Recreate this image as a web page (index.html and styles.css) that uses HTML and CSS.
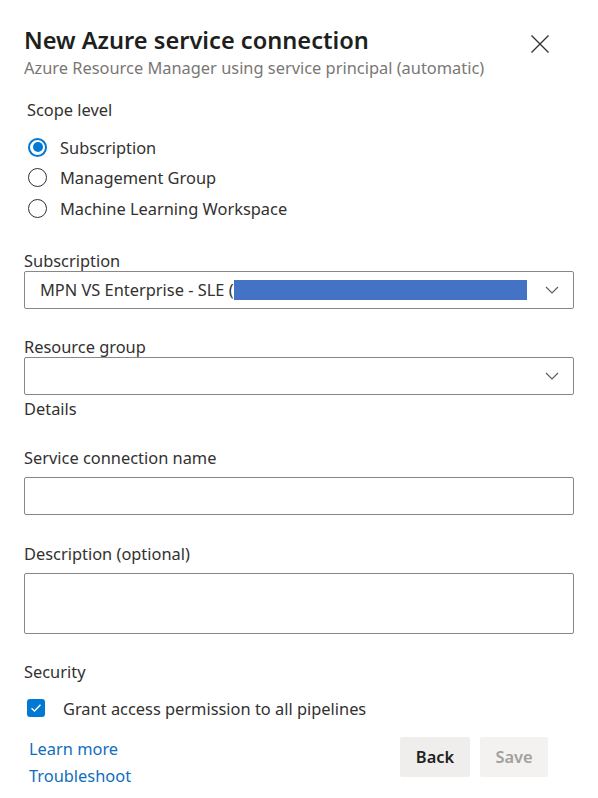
FILE: index.html
```html
<!DOCTYPE html>
<html>
<head>
<meta charset="utf-8">
<link rel="stylesheet" href="styles.css">
</head>
<body>
<div class="panel">
  <div class="header">
    <div class="titles">
      <div class="title">New Azure service connection</div>
      <div class="subtitle">Azure Resource Manager using service principal (automatic)</div>
    </div>
    <svg class="close" width="18" height="18" viewBox="0 0 18 18"><path d="M0.5 0.5 L17.5 17.5 M17.5 0.5 L0.5 17.5" stroke="#323130" stroke-width="1.3" fill="none"/></svg>
  </div>

  <div class="scope-label">Scope level</div>
  <div class="radios">
    <div class="radio-row"><span class="radio checked"></span><span>Subscription</span></div>
    <div class="radio-row"><span class="radio"></span><span>Management Group</span></div>
    <div class="radio-row"><span class="radio"></span><span>Machine Learning Workspace</span></div>
  </div>

  <div class="field sub-field">
    <div class="label">Subscription</div>
    <div class="box select">
      <span class="value">MPN VS Enterprise - SLE (</span><span class="redact"></span>
      <svg class="chev" width="14" height="8" viewBox="0 0 14 8"><path d="M1 1 L7 7 L13 1" stroke="#605e5c" stroke-width="1.2" fill="none"/></svg>
    </div>
  </div>

  <div class="field rg-field">
    <div class="label">Resource group</div>
    <div class="box select">
      <svg class="chev" width="14" height="8" viewBox="0 0 14 8"><path d="M1 1 L7 7 L13 1" stroke="#605e5c" stroke-width="1.2" fill="none"/></svg>
    </div>
  </div>
  <div class="details">Details</div>

  <div class="field name-field">
    <div class="label">Service connection name</div>
    <div class="box input"></div>
  </div>

  <div class="field desc-field">
    <div class="label">Description (optional)</div>
    <div class="box textarea"></div>
  </div>

  <div class="security">Security</div>
  <div class="check-row">
    <span class="checkbox"><svg width="12" height="10" viewBox="0 0 12 10"><path d="M1.5 5.2 L4.5 8 L10.5 1.8" stroke="#fff" stroke-width="1.4" fill="none"/></svg></span>
    <span>Grant access permission to all pipelines</span>
  </div>

  <div class="footer">
    <div class="links">
      <a class="link">Learn more</a>
      <a class="link">Troubleshoot</a>
    </div>
    <div class="buttons">
      <button class="btn back">Back</button>
      <button class="btn save">Save</button>
    </div>
  </div>
</div>
</body>
</html>
```
FILE: styles.css
```css
html, body {
  margin: 0;
  padding: 0;
  background: #ffffff;
}
body {
  font-family: "Noto Sans", "Open Sans", "Liberation Sans", sans-serif;
  color: #323130;
  font-size: 16.4px;
  width: 598px;
  height: 798px;
  overflow: hidden;
}
.panel {
  padding: 26px 24px 0 24px;
}
.header {
  display: flex;
  justify-content: space-between;
  align-items: flex-start;
}
.title {
  font-size: 23.6px;
  font-weight: 600;
  line-height: 28px;
  color: #201f1e;
}
.subtitle {
  font-size: 16.4px;
  line-height: 20px;
  color: #797775;
  margin-top: 4px;
}
.close {
  margin-top: 9px;
  margin-right: 25px;
}
.scope-label {
  margin-top: 21px;
  margin-left: 3px;
  line-height: 22px;
}
.radios {
  margin-top: 11px;
  margin-left: 4px;
  display: flex;
  flex-direction: column;
}
.radio-row {
  display: flex;
  align-items: center;
  height: 30.5px;
  gap: 13px;
}
.radio {
  width: 19px;
  height: 19px;
  box-sizing: border-box;
  border: 1px solid #323130;
  border-radius: 50%;
  position: relative;
}
.radio.checked {
  border: 2px solid #0078d4;
}
.radio.checked::after {
  content: "";
  position: absolute;
  left: 2.5px;
  top: 2.5px;
  width: 10px;
  height: 10px;
  border-radius: 50%;
  background: #0078d4;
}
.label {
  line-height: 21px;
}
.box {
  border: 1px solid #8a8886;
  border-radius: 2px;
  box-sizing: border-box;
  display: flex;
  align-items: center;
}
.select {
  height: 38px;
  padding: 0 14px 0 15px;
}
.value {
  white-space: pre;
}
.redact {
  width: 293px;
  height: 20px;
  background: #4472c4;
}
.chev {
  margin-left: auto;
}
.sub-field {
  margin-top: 26px;
}
.rg-field {
  margin-top: 27px;
}
.details {
  margin-top: 3px;
  line-height: 22px;
}
.name-field {
  margin-top: 27px;
}
.name-field .label, .desc-field .label {
  margin-bottom: 9px;
}
.input {
  height: 38px;
}
.desc-field {
  margin-top: 28px;
}
.textarea {
  height: 61px;
}
.security {
  margin-top: 27px;
  line-height: 22px;
}
.check-row {
  display: flex;
  align-items: center;
  gap: 18px;
  margin-top: 14px;
  margin-left: 3px;
}
.checkbox {
  width: 18px;
  height: 18px;
  border-radius: 3px;
  background: #0078d4;
  display: flex;
  align-items: center;
  justify-content: center;
}
.footer {
  display: flex;
  justify-content: space-between;
  margin-top: 15px;
}
.links {
  display: flex;
  flex-direction: column;
  margin-left: 5px;
}
.link {
  color: #106ebe;
  line-height: 27px;
  text-decoration: none;
}
.buttons {
  display: flex;
  gap: 10px;
  margin-top: 2px;
  margin-right: 26px;
}
.btn {
  border: none;
  border-radius: 2px;
  background: #efeeed;
  font-family: inherit;
  font-size: 16.4px;
  font-weight: 600;
  height: 40px;
  padding: 0;
}
.back {
  width: 70px;
  color: #201f1e;
}
.save {
  width: 68px;
  color: #a19f9d;
  background: #f3f2f1;
}
```
